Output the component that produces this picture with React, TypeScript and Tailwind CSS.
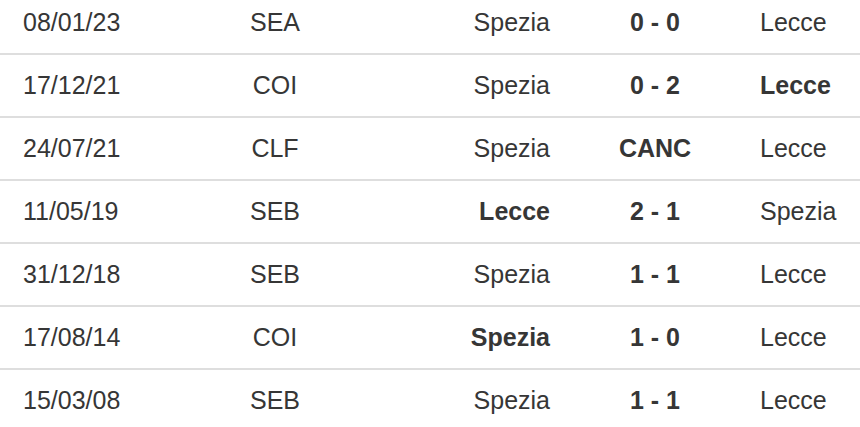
const rows: [string, string, string, string, string, "home" | "away" | null][] = [
  ["08/01/23", "SEA", "Spezia", "0 - 0", "Lecce", null],
  ["17/12/21", "COI", "Spezia", "0 - 2", "Lecce", "away"],
  ["24/07/21", "CLF", "Spezia", "CANC", "Lecce", null],
  ["11/05/19", "SEB", "Lecce", "2 - 1", "Spezia", "home"],
  ["31/12/18", "SEB", "Spezia", "1 - 1", "Lecce", null],
  ["17/08/14", "COI", "Spezia", "1 - 0", "Lecce", "home"],
  ["15/03/08", "SEB", "Spezia", "1 - 1", "Lecce", null],
];

export default function App() {
  return (
    <div className="w-[860px] h-[427px] overflow-hidden bg-white text-[#363636] text-[25px]" style={{ fontFamily: '"Liberation Sans", Arial, sans-serif' }}>
      <div className="-mt-[8px]">
        {rows.map(([date, comp, home, score, away, win]) => (
          <div key={date} className="h-[63px] grid grid-cols-[200px_150px_200px_210px_100px] items-center border-b-2 border-[#dedede]">
            <div className="pl-[23px]">{date}</div>
            <div className="text-center">{comp}</div>
            <div className={"text-right " + (win === "home" ? "font-bold" : "")}>{home}</div>
            <div className="text-center font-bold">{score}</div>
            <div className={win === "away" ? "font-bold" : ""}>{away}</div>
          </div>
        ))}
      </div>
    </div>
  );
}
